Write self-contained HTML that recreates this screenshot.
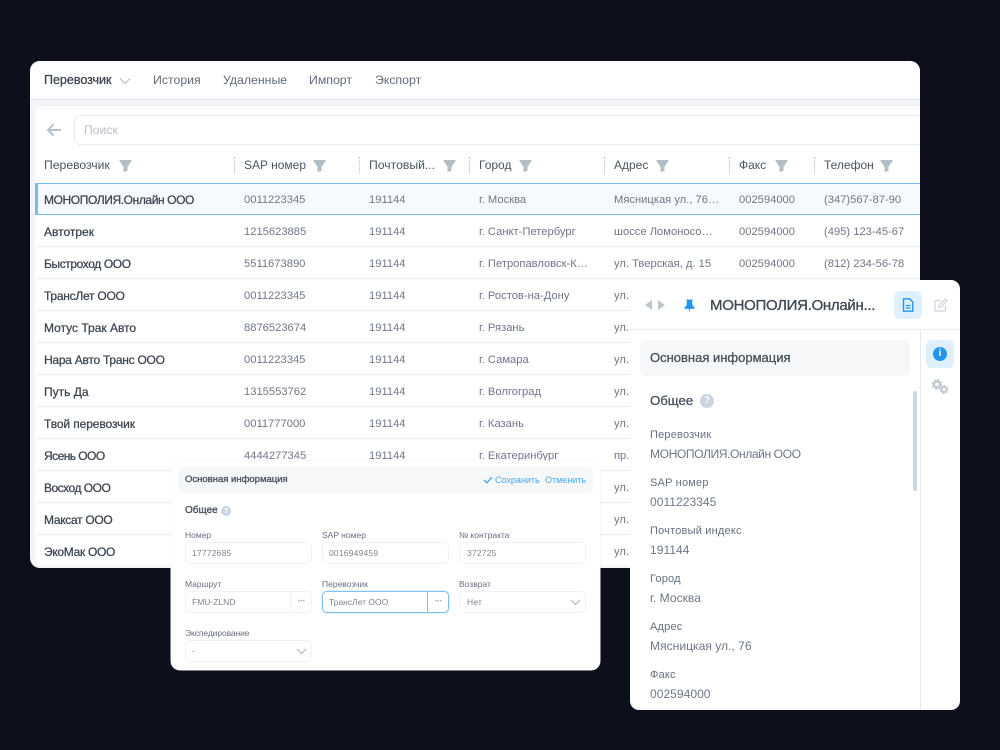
<!DOCTYPE html>
<html><head><meta charset="utf-8">
<style>
html,body{margin:0;padding:0;width:1000px;height:750px;overflow:hidden;background:#0d0f1c;font-family:"Liberation Sans",sans-serif}
div,span,svg{position:absolute}
.t{white-space:nowrap;line-height:16px;height:16px}
.m{-webkit-text-stroke:.3px currentColor}
#main{left:30px;top:61px;width:890px;height:507px;background:#f3f5f8;border-radius:10px;overflow:hidden}
.nav{font-size:12.3px;color:#5f6b7a;top:72px}
.h{font-size:12px;color:#4a5560;top:157px}
.n{font-size:12px;color:#3a444f;left:44px;margin-top:1px;-webkit-text-stroke:.25px currentColor}
.c{font-size:11.2px;color:#6e7888;margin-top:1px}
.line{left:36px;width:884px;height:1px;background:#e4ebf5}
.dv{top:157px;height:16px;width:0;border-left:1px dotted #b8c0c8}
.lb{font-size:11px;color:#667083;left:650px;letter-spacing:.2px}
.v{font-size:12.1px;color:#6e7888;left:650px}
.fl{font-size:8.5px;color:#667083}
.in{background:#fff;border:1px solid #eff2f9;border-radius:5px;box-sizing:border-box;height:22px}
.iv{font-size:8.5px;color:#7b8491;letter-spacing:.2px}
.dots{font-size:6px;color:#aab2bd;text-align:center;width:21px;letter-spacing:.3px}
</style></head><body>

<div id="main"></div>
<div style="left:30px;top:61px;width:890px;height:38px;background:#fff;border-radius:10px 10px 0 0"></div>
<div style="left:30px;top:99px;width:890px;height:1px;background:#e6e9ef"></div>
<div style="left:35px;top:105px;width:885px;height:460px;background:#fff;border-radius:8px 0 0 0;border-top:1px solid #e9edf3;box-sizing:border-box"></div>

<span class="t nav m" style="left:44px;color:#3c4650;font-size:12.5px">Перевозчик</span>
<svg style="left:119px;top:77px" width="12" height="8" viewBox="0 0 12 8"><path d="M1 1.500L6 6.500L11 1.500" fill="none" stroke="#b4bcc6" stroke-width="1"/></svg>
<span class="t nav" style="left:153px">История</span>
<span class="t nav" style="left:223px">Удаленные</span>
<span class="t nav" style="left:309px">Импорт</span>
<span class="t nav" style="left:375px">Экспорт</span>

<svg style="left:46px;top:123px" width="16" height="14" viewBox="0 0 16 14"><path d="M15 7H2M7.500 1.500L2 7L7.500 12.500" fill="none" stroke="#b4c0ca" stroke-width="2"/></svg>
<div style="left:74px;top:115px;width:846px;height:30px;border:1px solid #e6ebf4;border-right:0;border-radius:6px 0 0 6px;box-sizing:border-box;background:#fff"></div>
<span class="t" style="left:84px;top:122px;font-size:12.2px;color:#b8c0c8">Поиск</span>

<span class="t h" style="left:44px;font-size:12.2px">Перевозчик</span>
<span class="t h" style="left:244px">SAP номер</span>
<span class="t h" style="left:369px;font-size:12.2px">Почтовый...</span>
<span class="t h" style="left:479px">Город</span>
<span class="t h" style="left:614px">Адрес</span>
<span class="t h" style="left:739px">Факс</span>
<span class="t h" style="left:824px">Телефон</span>

<svg style="left:119px;top:160px" width="13" height="12" viewBox="0 0 13 12"><path d="M0 0H13L8.500 7V11L4.500 12V7Z" fill="#b3bfc7"/></svg>
<svg style="left:313px;top:160px" width="13" height="12" viewBox="0 0 13 12"><path d="M0 0H13L8.500 7V11L4.500 12V7Z" fill="#b3bfc7"/></svg>
<svg style="left:443px;top:160px" width="13" height="12" viewBox="0 0 13 12"><path d="M0 0H13L8.500 7V11L4.500 12V7Z" fill="#b3bfc7"/></svg>
<svg style="left:519px;top:160px" width="13" height="12" viewBox="0 0 13 12"><path d="M0 0H13L8.500 7V11L4.500 12V7Z" fill="#b3bfc7"/></svg>
<svg style="left:656px;top:160px" width="13" height="12" viewBox="0 0 13 12"><path d="M0 0H13L8.500 7V11L4.500 12V7Z" fill="#b3bfc7"/></svg>
<svg style="left:775px;top:160px" width="13" height="12" viewBox="0 0 13 12"><path d="M0 0H13L8.500 7V11L4.500 12V7Z" fill="#b3bfc7"/></svg>
<svg style="left:880px;top:160px" width="13" height="12" viewBox="0 0 13 12"><path d="M0 0H13L8.500 7V11L4.500 12V7Z" fill="#b3bfc7"/></svg>

<div class="dv" style="left:234px"></div>
<div class="dv" style="left:359px"></div>
<div class="dv" style="left:469px"></div>
<div class="dv" style="left:604px"></div>
<div class="dv" style="left:729px"></div>
<div class="dv" style="left:814px"></div>

<div style="left:35px;top:183px;width:885px;height:32px;background:#f6fafe;border-top:1px solid #74bdf3;border-bottom:1px solid #74bdf3;box-sizing:border-box"></div>
<div style="left:35px;top:183px;width:3px;height:32px;background:#74bdf3"></div>

<div class="line" style="top:246px"></div>
<div class="line" style="top:278px"></div>
<div class="line" style="top:310px"></div>
<div class="line" style="top:342px"></div>
<div class="line" style="top:374px"></div>
<div class="line" style="top:406px"></div>
<div class="line" style="top:438px"></div>
<div class="line" style="top:470px"></div>
<div class="line" style="top:502px"></div>
<div class="line" style="top:534px"></div>

<span class="t n" style="top:191px;letter-spacing:-.4px">МОНОПОЛИЯ.Онлайн ООО</span>
<span class="t c" style="left:244px;top:191px">0011223345</span><span class="t c" style="left:369px;top:191px">191144</span><span class="t c" style="left:479px;top:191px">г. Москва</span><span class="t c" style="left:614px;top:191px">Мясницкая ул., 76…</span><span class="t c" style="left:739px;top:191px">002594000</span><span class="t c" style="left:824px;top:191px">(347)567-87-90</span>

<span class="t n" style="top:223px">Автотрек</span>
<span class="t c" style="left:244px;top:223px">1215623885</span><span class="t c" style="left:369px;top:223px">191144</span><span class="t c" style="left:479px;top:223px">г. Санкт-Петербург</span><span class="t c" style="left:614px;top:223px">шоссе Ломоносо…</span><span class="t c" style="left:739px;top:223px">002594000</span><span class="t c" style="left:824px;top:223px">(495) 123-45-67</span>

<span class="t n" style="top:255px;letter-spacing:-.4px">Быстроход ООО</span>
<span class="t c" style="left:244px;top:255px">5511673890</span><span class="t c" style="left:369px;top:255px">191144</span><span class="t c" style="left:479px;top:255px">г. Петропавловск-К…</span><span class="t c" style="left:614px;top:255px">ул. Тверская, д. 15</span><span class="t c" style="left:739px;top:255px">002594000</span><span class="t c" style="left:824px;top:255px">(812) 234-56-78</span>

<span class="t n" style="top:287px;letter-spacing:-.25px">ТрансЛет ООО</span>
<span class="t c" style="left:244px;top:287px">0011223345</span><span class="t c" style="left:369px;top:287px">191144</span><span class="t c" style="left:479px;top:287px">г. Ростов-на-Дону</span><span class="t c" style="left:614px;top:287px">ул.</span>

<span class="t n" style="top:319px">Мотус Трак Авто</span>
<span class="t c" style="left:244px;top:319px">8876523674</span><span class="t c" style="left:369px;top:319px">191144</span><span class="t c" style="left:479px;top:319px">г. Рязань</span><span class="t c" style="left:614px;top:319px">ул.</span>

<span class="t n" style="top:351px;letter-spacing:-.25px">Нара Авто Транс ООО</span>
<span class="t c" style="left:244px;top:351px">0011223345</span><span class="t c" style="left:369px;top:351px">191144</span><span class="t c" style="left:479px;top:351px">г. Самара</span><span class="t c" style="left:614px;top:351px">ул.</span>

<span class="t n" style="top:383px">Путь Да</span>
<span class="t c" style="left:244px;top:383px">1315553762</span><span class="t c" style="left:369px;top:383px">191144</span><span class="t c" style="left:479px;top:383px">г. Волгоград</span><span class="t c" style="left:614px;top:383px">ул.</span>

<span class="t n" style="top:415px;letter-spacing:-.1px">Твой перевозчик</span>
<span class="t c" style="left:244px;top:415px">0011777000</span><span class="t c" style="left:369px;top:415px">191144</span><span class="t c" style="left:479px;top:415px">г. Казань</span><span class="t c" style="left:614px;top:415px">ул.</span>

<span class="t n" style="top:447px;letter-spacing:-.55px">Ясень ООО</span>
<span class="t c" style="left:244px;top:447px">4444277345</span><span class="t c" style="left:369px;top:447px">191144</span><span class="t c" style="left:479px;top:447px">г. Екатеринбург</span><span class="t c" style="left:614px;top:447px">пр.</span>

<span class="t n" style="top:479px;letter-spacing:-.5px">Восход ООО</span>
<span class="t c" style="left:614px;top:479px">ул.</span>
<span class="t n" style="top:511px;letter-spacing:-.3px">Максат ООО</span>
<span class="t c" style="left:614px;top:511px">ул.</span>
<span class="t n" style="top:543px;letter-spacing:-.3px">ЭкоМак ООО</span>
<span class="t c" style="left:614px;top:543px">ул.</span>

<!-- form card -->
<div style="left:171px;top:461px;width:429px;height:209px;background:#fff;border-radius:9px;box-shadow:0 0 0 .5px #eef1f5"></div>
<div style="left:178px;top:467px;width:415px;height:26px;background:#f6f7f9;border-radius:5px"></div>
<span class="t m" style="left:185px;top:472px;font-size:9.500px;color:#4a5560;-webkit-text-stroke-width:.35px">Основная информация</span>
<svg style="left:483px;top:476px" width="10" height="8" viewBox="0 0 10 8"><path d="M1 4L3.800 6.800L9 1.200" fill="none" stroke="#4aa8f0" stroke-width="1.400"/></svg>
<span class="t" style="left:495px;top:472px;font-size:9px;color:#4aa8f0">Сохранить</span>
<span class="t" style="left:545px;top:472px;font-size:9px;color:#4aa8f0">Отменить</span>
<span class="t m" style="left:185px;top:503px;font-size:10px;color:#4a5560;-webkit-text-stroke-width:.35px">Общее</span>
<div style="left:221px;top:506px;width:10px;height:10px;border-radius:50%;background:#ccd4e2"></div>
<span class="t" style="left:221px;top:503px;width:10px;text-align:center;font-size:7.500px;font-weight:bold;color:#fff">?</span>

<span class="t fl" style="left:185px;top:527px">Номер</span>
<span class="t fl" style="left:322px;top:527px">SAP номер</span>
<span class="t fl" style="left:459px;top:527px">№ контракта</span>
<div class="in" style="left:185px;top:542px;width:127px"></div>
<div class="in" style="left:322px;top:542px;width:127px"></div>
<div class="in" style="left:459px;top:542px;width:127px"></div>
<span class="t iv" style="left:192px;top:545px">17772685</span>
<span class="t iv" style="left:329px;top:545px">0016949459</span>
<span class="t iv" style="left:467px;top:545px">372725</span>

<span class="t fl" style="left:185px;top:576px">Маршрут</span>
<span class="t fl" style="left:322px;top:576px">Перевозчик</span>
<span class="t fl" style="left:459px;top:576px">Возврат</span>
<div class="in" style="left:185px;top:591px;width:127px"></div>
<div style="left:290px;top:591px;width:1px;height:22px;background:#eff2f9"></div>
<span class="t dots" style="left:291px;top:594px">•••</span>
<div class="in" style="left:322px;top:591px;width:127px;border:1px solid #7cc0f4;box-shadow:0 0 0 1px #e3f2fd"></div>
<div style="left:427px;top:591px;width:1px;height:22px;background:#7cc0f4"></div>
<span class="t dots" style="left:428px;top:594px">•••</span>
<div class="in" style="left:459px;top:591px;width:127px"></div>
<span class="t iv" style="left:192px;top:594px;letter-spacing:0">FMU-ZLND</span>
<span class="t iv" style="left:329px;top:594px;letter-spacing:0">ТрансЛет ООО</span>
<span class="t iv" style="left:467px;top:594px">Нет</span>
<svg style="left:570px;top:599px" width="11" height="7" viewBox="0 0 11 7"><path d="M1 1L5.500 5.500L10 1" fill="none" stroke="#aab2bd" stroke-width="1"/></svg>

<span class="t fl" style="left:185px;top:625px;letter-spacing:-.1px">Экспедирование</span>
<div class="in" style="left:185px;top:640px;width:127px"></div>
<span class="t iv" style="left:192px;top:643px">-</span>
<svg style="left:296px;top:648px" width="11" height="7" viewBox="0 0 11 7"><path d="M1 1L5.500 5.500L10 1" fill="none" stroke="#aab2bd" stroke-width="1"/></svg>

<!-- detail card -->
<div style="left:630px;top:280px;width:330px;height:430px;background:#fff;border-radius:9px"></div>
<div style="left:630px;top:329px;width:330px;height:1px;background:#e4e9f3"></div>
<div style="left:920px;top:330px;width:1px;height:380px;background:#e4e9f3"></div>

<svg style="left:645px;top:300px" width="20" height="10" viewBox="0 0 20 10"><path d="M7 0V10L0 5Z" fill="#bcc6cf"/><path d="M13 0V10L20 5Z" fill="#bcc6cf"/></svg>
<svg style="left:684px;top:299px" width="11" height="14" viewBox="0 0 12 15"><path d="M2.500 0.500H9.500V2H8.700L9.300 7L11.500 9V10.500H6.800L6 14.500L5.200 10.500H0.500V9L2.700 7L3.300 2H2.500Z" fill="#2394ef"/></svg>
<span class="t m" style="left:710px;top:296px;height:20px;line-height:20px;font-size:15px;color:#3e4953;letter-spacing:-.3px">МОНОПОЛИЯ.Онлайн...</span>
<div style="left:894px;top:291px;width:28px;height:28px;border-radius:6px;background:#def0fe"></div>
<svg style="left:902px;top:298px" width="12" height="14" viewBox="0 0 12 14"><path d="M1.500 0.800H7.500L10.800 4V13.200H1.500Z" fill="none" stroke="#2394ef" stroke-width="1.400" stroke-linejoin="round"/><path d="M3.800 7.500H8.500M3.800 10H8.500" stroke="#2394ef" stroke-width="1.300"/></svg>
<svg style="left:934px;top:298px" width="14" height="14" viewBox="0 0 14 14"><path d="M7 2.500H2.200C1.500 2.500 1 3 1 3.700V11.800C1 12.500 1.500 13 2.200 13H10.300C11 13 11.500 12.500 11.500 11.800V7.500" fill="none" stroke="#cdd3d9" stroke-width="1.200"/><path d="M5 9.500L5.500 7L11.500 1L13.200 2.700L7.200 8.800Z" fill="none" stroke="#cdd3d9" stroke-width="1.200" stroke-linejoin="round"/></svg>

<div style="left:640px;top:340px;width:270px;height:36px;background:#f6f7f9;border-radius:6px"></div>
<span class="t m" style="left:650px;top:350px;font-size:13px;color:#47525c">Основная информация</span>
<span class="t m" style="left:650px;top:393px;font-size:13.200px;color:#47525c">Общее</span>
<div style="left:700px;top:394px;width:14px;height:14px;border-radius:50%;background:#ccd4e2"></div>
<span class="t" style="left:700px;top:393px;width:14px;text-align:center;font-size:10px;font-weight:bold;color:#fff">?</span>

<div style="left:913px;top:391px;width:4px;height:100px;background:#cfd6e2;border-radius:2px"></div>

<div style="left:926px;top:340px;width:28px;height:28px;border-radius:6px;background:#def0fe"></div>
<div style="left:933px;top:347px;width:14px;height:14px;border-radius:50%;background:#2394ef"></div>
<span class="t" style="left:933px;top:346px;width:14px;text-align:center;font-size:10px;font-weight:bold;color:#fff">i</span>
<svg style="left:931px;top:379px" width="18" height="16" viewBox="0 0 18 16"><circle cx="6" cy="5.500" r="3" fill="none" stroke="#c3c9d0" stroke-width="2.400"/><circle cx="6" cy="5.500" r="4.800" fill="none" stroke="#c3c9d0" stroke-width="1.400" stroke-dasharray="1.900 1.900"/><circle cx="13" cy="10.500" r="2.500" fill="none" stroke="#c3c9d0" stroke-width="2"/><circle cx="13" cy="10.500" r="4" fill="none" stroke="#c3c9d0" stroke-width="1.200" stroke-dasharray="1.600 1.500"/></svg>

<span class="t lb" style="top:427px">Перевозчик</span>
<span class="t v" style="top:446px;letter-spacing:-.43px">МОНОПОЛИЯ.Онлайн ООО</span>
<span class="t lb" style="top:475px">SAP номер</span>
<span class="t v" style="top:494px">0011223345</span>
<span class="t lb" style="top:523px">Почтовый индекс</span>
<span class="t v" style="top:542px">191144</span>
<span class="t lb" style="top:571px">Город</span>
<span class="t v" style="top:590px">г. Москва</span>
<span class="t lb" style="top:619px">Адрес</span>
<span class="t v" style="top:638px">Мясницкая ул., 76</span>
<span class="t lb" style="top:667px">Факс</span>
<span class="t v" style="top:686px">002594000</span>

</body></html>
